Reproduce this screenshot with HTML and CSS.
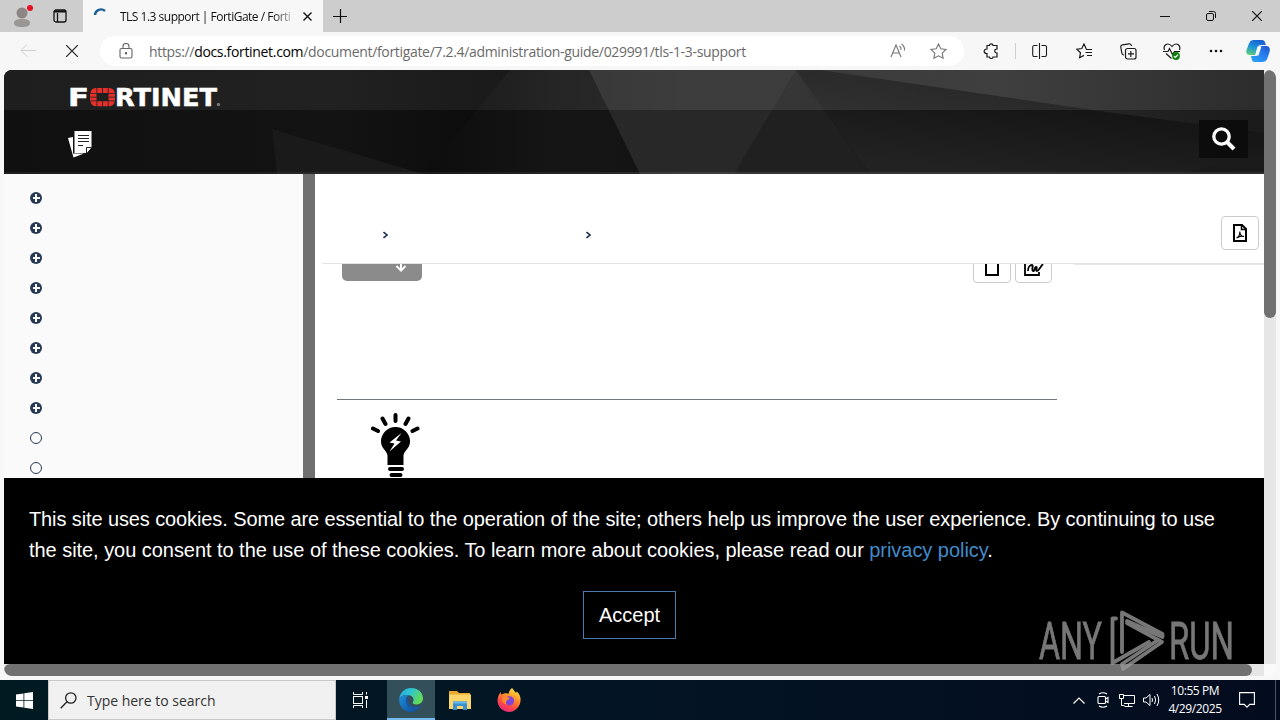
FILE: index.html
```html
<!DOCTYPE html>
<html lang="en">

<head>
    <meta charset="UTF-8">
    <meta name="viewport" content="width=device-width, initial-scale=1.0">
    <title>TLS 1.3 support | FortiGate / FortiOS</title>
    <link rel="stylesheet" href="styles.css">
</head>

<body>
    <div class="desktop">
        <div class="window">
            <div class="titlebar">
                <div class="slot avatar">
                    <svg width="22" height="24" viewBox="0 0 22 24"><circle cx="11" cy="9" r="5.5" fill="#8c8785"/><path d="M3 19c0-3 3-4 8-4s8 1 8 4-3 4-8 4-8-1-8-4z" fill="#9a9694"/><circle cx="19" cy="4" r="3" fill="#e81123"/></svg>
                </div>
                <div class="slot workspaces">
                    <svg width="14" height="14" viewBox="0 0 14 14" fill="none" stroke="#111" stroke-width="1.3"><rect x="1" y="1" width="12" height="12" rx="2"/><path d="M1 2.500h12" stroke-width="2"/><path d="M4.500 4v9"/></svg>
                </div>
                <div class="tab">
                    <svg class="spinner" width="16" height="16" viewBox="0 0 16 16" fill="none" stroke="#1b6097" stroke-width="2.400"><path d="M2 7a6 6 0 0 1 10-4"/></svg>
                    <span class="tab-title">TLS 1.3 support | FortiGate / Forti</span>
                    <svg width="9" height="9" viewBox="0 0 9 9" stroke="#111" stroke-width="1.4"><path d="M.5.5l8 8M8.500.5l-8 8"/></svg>
                </div>
                <div class="slot new-tab">
                    <svg width="14" height="14" viewBox="0 0 14 14" stroke="#111" stroke-width="1.2"><path d="M7.500 0v14M0 7.500h14"/></svg>
                </div>
                <div class="controls">
                    <svg width="10" height="10" viewBox="0 0 10 10" stroke="#111"><path d="M0 5.500h10"/></svg>
                    <svg width="10" height="10" viewBox="0 0 10 10" fill="none" stroke="#111"><rect x=".5" y="2.500" width="7" height="7" rx="1.500"/><path d="M3 .5h4.500a2 2 0 0 1 2 2V7"/></svg>
                    <svg width="10" height="10" viewBox="0 0 10 10" stroke="#111" stroke-width="1.200"><path d="M0 0l10 10M10 0L0 10"/></svg>
                </div>
            </div>

            <div class="toolbar">
                <div class="slot back">
                    <svg width="16" height="14" viewBox="0 0 16 14" fill="none" stroke="#cfcfcf"><path d="M16 6.500H1M7 .5l-6 6 6 6"/></svg>
                </div>
                <div class="slot stop">
                    <svg width="12" height="12" viewBox="0 0 12 12" stroke="#222" stroke-width="1.200"><path d="M0 0l12 12M12 0L0 12"/></svg>
                </div>
                <div class="address">
                    <div class="slot lock">
                        <svg width="14" height="16" viewBox="0 0 14 16" fill="none" stroke="#666" stroke-width="1.100"><rect x="1" y="5.500" width="12" height="9.500" rx="1.500"/><path d="M4 5.500V3.500a3 3 0 0 1 6 0v2"/><circle cx="7" cy="10.200" r=".7" fill="#666"/></svg>
                    </div>
                    <div class="url">https://<b>docs.fortinet.com</b>/document/fortigate/7.2.4/administration-guide/029991/tls-1-3-support</div>
                    <div class="slot read">
                        <svg width="16" height="16" viewBox="0 0 16 16" fill="none" stroke="#777" stroke-width="1.100"><path d="M1 14L6 2l5 12M2.700 10h6.600M9.500 3q1.800 1.500 1.500 4M11.500 1q3.500 2.500 3 6.500"/></svg>
                    </div>
                    <div class="slot star">
                        <svg width="17" height="17" viewBox="0 0 17 17" fill="none" stroke="#777" stroke-width="1.100"><path d="M8.500 1l2.300 4.800 5.200.7-3.800 3.600.9 5.200-4.600-2.500-4.600 2.500.9-5.200L1 6.500l5.200-.7z"/></svg>
                    </div>
                </div>
                <div class="slot puzzle">
                    <svg width="16" height="16" viewBox="0 0 16 16" fill="none" stroke="#1b1b1b" stroke-width="1.200"><path d="M4 2.500h2.500C6.500.2 10 .2 10 2.500h4V6c-3-.3-3 4.200 0 4v4h-4c0 2-3.500 2-3.500 0H4v-3.500C.2 10.500.2 6 4 6z"/></svg>
                </div>
                <div class="separator"></div>
                <div class="tools">
                    <svg width="16" height="16" viewBox="0 0 16 16" fill="none" stroke="#1b1b1b" stroke-width="1.100"><path d="M5.500 2.500H2A1.500 1.500 0 0 0 .7 4v8A1.500 1.500 0 0 0 2 13.500h3.500M9.500 2.500H13A1.500 1.500 0 0 1 14.500 4v8a1.500 1.500 0 0 1-1.500 1.500H9.500M7.500 0v16"/></svg>
                    <svg width="17" height="16" viewBox="0 0 17 16" fill="none" stroke="#1b1b1b" stroke-width="1.200"><path d="M16 6.500h-5.500L8 1 5.800 5.500.8 6.200l3.700 3.500-.9 5L8 12.400M9.500 9.500H16M11 12.500h5"/></svg>
                    <svg width="17" height="17" viewBox="0 0 17 17" fill="none" stroke="#1b1b1b" stroke-width="1.200"><rect x="5.500" y="5.500" width="10.500" height="10.500" rx="2"/><path d="M10.800 8v6M8 10.800h6M4 12C2.500 12 2 11 1.700 9.500L.8 4C.6 2.700 1.300 2 2.500 1.800L9 .8c1.500-.2 2.300.6 2.600 2.200"/></svg>
                    <svg width="18" height="17" viewBox="0 0 18 17" fill="none" stroke="#1b1b1b" stroke-width="1.200"><path d="M1.500 7C.3 4 2 1 4.700 1 7 1 8 2.200 9 3.500 10 2.200 11 1 13.300 1 16 1 17.600 4 16.500 7M0 8.500h5l1.500-3 3 6 2-3H17M3 10.500l5.500 5"/><circle cx="13" cy="13" r="3.900" fill="#107c10" stroke="none"/><path d="M11 13.200l1.500 1.300L15 11.700" stroke="#fff"/></svg>
                    <svg width="14" height="4" viewBox="0 0 14 4" fill="#111"><circle cx="2" cy="2" r="1.300"/><circle cx="7" cy="2" r="1.300"/><circle cx="12" cy="2" r="1.300"/></svg>
                </div>
                <div class="slot copilot">
                    <svg width="24" height="22" viewBox="0 0 24 22">
                        <defs>
                            <linearGradient id="cpA" x1=".6" y1="0" x2=".2" y2="1"><stop offset="0" stop-color="#1a5fd0"/><stop offset=".5" stop-color="#1e95d8"/><stop offset="1" stop-color="#5ed07a"/></linearGradient>
                            <linearGradient id="cpB" x1="1" y1="0" x2=".2" y2="1"><stop offset="0" stop-color="#1c55c8"/><stop offset=".5" stop-color="#2a7df0"/><stop offset="1" stop-color="#28a1f3"/></linearGradient>
                        </defs>
                        <path d="M8 0h8c3 0 3 3 4 5h-5c-2 0-3 1-3.500 3L9.500 15H4c-3 0-4.500-2-3.500-5L3 3.500C4 1 5.500 0 8 0z" fill="url(#cpA)"/>
                        <path d="M16 22H9c-3 0-3-2-4-6h4c2 0 3-1 3.500-3l2-7H20c3.500 0 4.500 2.500 3.500 6l-2 6c-1 3-3 4-5.500 4z" fill="url(#cpB)"/>
                        <path d="M11.500 6.500h4L12.500 15.500H9z" fill="#f4f9ff"/>
                    </svg>
                </div>
            </div>

            <div class="viewport">
                <div class="page">
                    <header class="site-header">
                        <svg class="facets" width="1260" height="104" viewBox="4 70 1260 104">
                            <defs>
                                <linearGradient id="fold" x1="0" y1="0" x2="1" y2="0"><stop offset="0" stop-color="#101010"/><stop offset=".65" stop-color="#131313"/><stop offset="1" stop-color="#0b0b0b"/></linearGradient>
                                <linearGradient id="valley" x1="0" y1="0" x2="1" y2="0"><stop offset="0" stop-color="#0d0d0d"/><stop offset=".6" stop-color="#151515"/><stop offset="1" stop-color="#141414"/></linearGradient>
                                <linearGradient id="slope" gradientUnits="userSpaceOnUse" x1="1010" y1="92" x2="1000" y2="174"><stop offset="0" stop-color="#141414"/><stop offset="1" stop-color="#222"/></linearGradient>
                                <linearGradient id="ridge" x1="0" y1="0" x2="1" y2="0"><stop offset="0" stop-color="#262626"/><stop offset=".4" stop-color="#2c2c2c"/><stop offset="1" stop-color="#1a1a1a"/></linearGradient>
                                <linearGradient id="shine" gradientUnits="userSpaceOnUse" x1="4" y1="0" x2="1264" y2="0"><stop offset="0" stop-color="#fff" stop-opacity=".06"/><stop offset=".4" stop-color="#fff" stop-opacity=".06"/><stop offset=".55" stop-color="#fff" stop-opacity=".1"/><stop offset="1" stop-color="#fff" stop-opacity=".08"/></linearGradient>
                            </defs>
                            <path d="M4 70H510L428 174H4z" fill="url(#fold)"/>
                            <path d="M510 70h80l51 104H424z" fill="url(#valley)"/>
                            <path d="M272 129l158 47H277z" fill="#1a1a1a"/>
                            <path d="M589 70h208l-62 104h-95z" fill="#282828"/>
                            <path d="M796 70l74 104H734z" fill="#202020"/>
                            <path d="M796 70h468v104H870z" fill="url(#slope)"/>
                            <path d="M820 70h444v63l-164-22z" fill="url(#ridge)"/>
                            <path d="M1264 154v20h-84z" fill="#1b1b1b"/>
                            <path d="M4 70h1260v40H4zM4 172h1260v2H4z" fill="url(#shine)"/>
                        </svg>
                        <div class="brand">
                            <svg width="164" height="32" viewBox="-4 -6 164 32">
                                <g class="wordmark">
                                    <text x="-2" y="18" textLength="21" lengthAdjust="spacingAndGlyphs">F</text>
                                    <text x="45" y="18" textLength="102" lengthAdjust="spacingAndGlyphs">RTINET</text>
                                </g>
                                <g fill="#e5302c">
                                    <path d="M20.500 5Q21 0 26.500 0v5zM27.300 0h10.400v5H27.300zM38.500 0q5.700 0 6.200 5h-6.200zM20 5.800h6.500v6.700H20zM38.500 5.800H45v6.700h-6.500zM20.500 13.300h6v5q-5.500 0-6-5zM27.300 13.300h10.400v5H27.300zM38.500 13.300h6.200q-.5 5-6.200 5z"/>
                                    <path d="M32 0h.9v5H32zM32 13.300h.9v5H32zM20 8.800h6.500v.8H20zM38.500 8.800H45v.8h-6.500z" fill="#1d1d1d"/>
                                </g>
                                <circle cx="148.500" cy="16.500" r="1.700" fill="#777"/>
                            </svg>
                        </div>
                        <div class="nav">
                            <svg width="25" height="27" viewBox="0 0 25 27"><path d="M0 7l5-1v16.500h11L5.500 26.500z" fill="#fff"/><path d="M6.500 0h17v16l-5 6h-12z" fill="#fff"/><path d="M10 4.500h11M10 7.500h11M10 10.500h11M10 14.500h5" stroke="#222" stroke-width="1.200"/><path d="M18.500 22v-5.500h5" fill="#fff" stroke="#222"/></svg>
                            <button class="search-btn">
                                <svg width="24" height="24" viewBox="0 0 24 24" fill="none" stroke="#fff"><circle cx="9.500" cy="9.500" r="7.700" stroke-width="3.300"/><path d="M15 15l7 7" stroke-width="4"/></svg>
                            </button>
                        </div>
                    </header>

                    <div class="content">
                        <ul class="toc">
                            <li><i class="node plus"></i></li>
                            <li><i class="node plus"></i></li>
                            <li><i class="node plus"></i></li>
                            <li><i class="node plus"></i></li>
                            <li><i class="node plus"></i></li>
                            <li><i class="node plus"></i></li>
                            <li><i class="node plus"></i></li>
                            <li><i class="node plus"></i></li>
                            <li><i class="node"></i></li>
                            <li><i class="node"></i></li>
                        </ul>
                        <div class="resizer"></div>
                        <main class="doc">
                            <div class="crumbs">
                                <svg class="crumb-first" width="5" height="8" viewBox="0 0 5 8" fill="none" stroke="#1d2f50" stroke-width="1.600"><path d="M.5 1L4 4 .5 7"/></svg>
                                <svg class="crumb-second" width="5" height="8" viewBox="0 0 5 8" fill="none" stroke="#1d2f50" stroke-width="1.600"><path d="M.5 1L4 4 .5 7"/></svg>
                                <button class="icon-btn pdf">
                                    <svg width="14" height="18" viewBox="0 0 14 18" fill="none" stroke="#000"><path d="M1 1h8l4 4v12H1z" stroke-width="2"/><path d="M8.500 1v4.500H13" stroke-width="1.500"/><path d="M3.500 14c2-1 3.500-4 3.300-6.500C7 11 9 12.500 11 12.500c-2-.8-5 0-7.500 1.500" stroke-width="1.100"/></svg>
                                </button>
                            </div>
                            <div class="actions">
                                <div class="version">
                                    <svg width="12" height="14" viewBox="0 0 12 14" fill="none" stroke="#fff" stroke-width="2"><path d="M6 0v12M1.500 7L6 11.500 10.500 7"/></svg>
                                </div>
                                <button class="icon-btn copy">
                                    <svg width="14" height="18" viewBox="0 0 14 18" fill="none" stroke="#000" stroke-width="2"><path d="M1 1h12v16H1z"/></svg>
                                </button>
                                <button class="icon-btn chart">
                                    <svg width="20" height="18" viewBox="0 0 20 18" fill="none" stroke="#000" stroke-width="1.800"><path d="M1 1v16h14v-3"/><path d="M4 13c0-4 2-6 4-6s-1 5 1 6 1-4 3-4-1 4 1 4 3-4 6-7" stroke-width="1.800"/></svg>
                                </button>
                                <div class="aside-line"></div>
                            </div>
                            <div class="article">
                                <hr>
                                <svg class="tip" width="50" height="65" viewBox="0 0 50 65">
                                    <g stroke="#000" stroke-width="4" stroke-linecap="round"><path d="M25.500 2v6M12.500 5.500l3 5.500M38.500 5.500L35.500 11M3 15.500L8 18M47.500 15.500l-5 2.500"/></g>
                                    <path d="M25.500 14a14.500 14.500 0 0 1 14.500 14.500c0 7-6 9-6.500 14V52h-16v-9.500c-.5-5-6.500-7-6.500-14A14.500 14.500 0 0 1 25.500 14z"/>
                                    <path d="M31.500 20l-12 9.500 5 1-5 8 11.500-10-5-1z" fill="#fff"/>
                                    <path d="M20 56h12M21.500 62h9" stroke="#000" stroke-width="4" stroke-linecap="round"/>
                                </svg>
                            </div>
                        </main>
                    </div>

                    <div class="cookies">
                        <p><span class="first-line">This site uses cookies. Some are essential to the operation of the site; others help us improve the user experience. By continuing to use</span><br>the site, you consent to the use of these cookies. To learn more about cookies, please read our <a href="#">privacy policy</a>.</p>
                        <button class="accept">Accept</button>
                    </div>
                </div>
                <div class="scroll-y"><div class="thumb"></div></div>
                <div class="scroll-x"><div class="thumb"></div></div>
            </div>
        </div>

        <div class="taskbar">
            <div class="slot start">
                <svg width="17" height="17" viewBox="0 0 17 17" fill="#fff"><path d="M0 2.500l7.500-1V8H0zM8.300 1.300L17 0v8H8.300zM0 8.800h7.500v6.700l-7.500-1zM8.300 8.800H17V17l-8.700-1.300z"/></svg>
            </div>
            <div class="search">
                <svg width="17" height="17" viewBox="0 0 17 17" fill="none" stroke="#222" stroke-width="1.300"><circle cx="10.800" cy="6" r="5.200"/><path d="M7 9.800L.7 16.300"/></svg>
                <span>Type here to search</span>
            </div>
            <div class="slot app task-view">
                <svg width="17" height="16" viewBox="0 0 17 16" fill="none" stroke="#fff"><path d="M1.500 0v2.500h9V0M1.500 16v-2.500h9V16M14.500 0v2.500M14.500 8v8"/><rect x="1.500" y="4.500" width="9" height="7"/><path d="M13 5.500h3" stroke-width="3"/></svg>
            </div>
            <div class="slot app active">
                <svg width="24" height="24" viewBox="0 0 24 24">
                    <defs>
                        <linearGradient id="edTop" x1="0" y1="0" x2="1" y2=".4"><stop offset="0" stop-color="#2ba6e0"/><stop offset=".5" stop-color="#2fc6cf"/><stop offset="1" stop-color="#62d957"/></linearGradient>
                        <linearGradient id="edLow" x1="0" y1="0" x2="1" y2="1"><stop offset="0" stop-color="#1e8fdc"/><stop offset="1" stop-color="#0c4c9c"/></linearGradient>
                    </defs>
                    <path d="M.2 11C.8 4.500 5.800 0 12 0c7 0 12 4.800 12 10.300 0 4-3 6.200-6.500 6.200-3 0-4.300-1.200-3.700-2.200 2-2.800.2-6.500-3.800-7C5.500 6.500 1.500 8 .2 11z" fill="url(#edTop)"/>
                    <path d="M.2 11C1.500 8 5.500 6.500 10 7.300 7.500 8.500 6.500 11 6.800 13.500 7.500 18.500 12 22 18 21.500 16 23.300 14 24 12 24 5 24-.3 18 .2 11z" fill="url(#edLow)"/>
                    <path d="M10 9.500c-2.500 4 0 9.500 6.500 9.500 2.500 0 4.500-.6 6-1.700-1 2-2.500 3.500-4.500 4.200C11 22 6 17 7 12c.5-1.500 1.500-2.300 3-2.500z" fill="#1657a8"/>
                </svg>
            </div>
            <div class="slot app">
                <svg width="22" height="20" viewBox="0 0 22 20"><path d="M0 1h8l2 2h11v16H0z" fill="#e8a92c"/><path d="M0 4.500h22V19H0z" fill="#fbd46a"/><path d="M4 20v-8.500h14V20h-4v-4H8v4z" fill="#3a8fd0"/><path d="M4 11.500h14v2H4z" fill="#67b6e8"/></svg>
            </div>
            <div class="slot app">
                <svg width="24" height="24" viewBox="0 0 24 24">
                    <defs><linearGradient id="fx" x1=".8" y1="0" x2=".3" y2="1"><stop offset="0" stop-color="#fff04a"/><stop offset=".35" stop-color="#ff9a2a"/><stop offset=".7" stop-color="#ff4a45"/><stop offset="1" stop-color="#e5257e"/></linearGradient></defs>
                    <path d="M15 0c2 2 2.500 3.500 4 5l.8-1.500C22.500 6 24 9 23.500 13 23 19 18 24 12 24S.5 19 .5 12.500C.5 9 2 6.500 3.500 4l.7 2.500L7 5.500C9 5 11 5.500 11.500 6c.3-2.500 1.500-4.500 3.500-6z" fill="url(#fx)"/>
                    <circle cx="12.500" cy="12.800" r="4.600" fill="#8144d8"/>
                    <path d="M6 9c3-1 4.500.5 7 1-1 1.500-3 1.500-3.500 3 0 0-1.500 2 .5 3.500-4 0-6-4-4-7.500z" fill="#ff8a2e"/>
                </svg>
            </div>
            <div class="tray">
                <svg width="12" height="7" viewBox="0 0 12 7" fill="none" stroke="#fff" stroke-width="1.200"><path d="M.5 6.500L6 1l5.500 5.500"/></svg>
                <svg width="14" height="16" viewBox="0 0 14 16" fill="none" stroke="#fff" stroke-width="1.100"><rect x="2" y="4.500" width="7.500" height="7" rx="1"/><path d="M9.500 7l2.500-1.500v5L9.500 9M3 2q4-2.500 8 0M3 14q4 2.500 8 0"/></svg>
                <svg width="16" height="14" viewBox="0 0 16 14" fill="none" stroke="#fff"><path d="M5 2.500h10.500v8H5M5.500 13.500h8M9.500 10.500v3M.5 1.500h4v4h-4zM2.500 5.500v7h3"/></svg>
                <svg width="17" height="14" viewBox="0 0 17 14" fill="none" stroke="#fff"><path d="M.5 5v4h2.500L7 12.500v-11L3 5zM9 5q1 2 0 4M11.500 3q2.300 4 0 8M14 1q3.500 6 0 12"/></svg>
            </div>
            <div class="clock">10:55 PM<br>4/29/2025</div>
            <div class="slot notify">
                <svg width="16" height="16" viewBox="0 0 16 16" fill="none" stroke="#fff" stroke-width="1.100"><path d="M.6.6h14.800v11.800h-4.600L8 15.200l-2.800-2.800H.6z"/></svg>
            </div>
            <div class="peek"></div>
        </div>

        <svg class="watermark" width="196" height="70" viewBox="-1 0 196 70">
            <g class="watermark-text">
                <text x="0" y="49" textLength="63" lengthAdjust="spacingAndGlyphs">ANY</text>
                <text x="130" y="49" textLength="65" lengthAdjust="spacingAndGlyphs">RUN</text>
            </g>
            <g fill="none" stroke="#999" stroke-width="3.800" stroke-linejoin="round" stroke-linecap="round">
                <path d="M83 42V2.500L123.500 24v3L88 11"/>
                <path d="M77 8.500h-3.500V53L110 32"/>
                <path d="M88 13l35 19-39 27-1-5 36-24"/>
            </g>
        </svg>
    </div>
</body>

</html>
```
FILE: styles.css
```css
* {
    box-sizing: border-box;
}

body {
    margin: 0;
    font-family: 'Open Sans', 'Noto Sans', sans-serif;
    overflow: hidden;
}

svg {
    display: block;
    flex: none;
}

button {
    padding: 0;
    cursor: pointer;
}

.desktop {
    position: relative;
    width: 1280px;
    height: 720px;
    display: flex;
    flex-direction: column;
}

.slot {
    flex: none;
    display: flex;
    align-items: center;
    justify-content: center;
}

/* browser window */
.window {
    height: 680px;
    background: #f7f7f7;
}

.titlebar {
    height: 32px;
    display: flex;
    background: #cdcdcd;
}

.avatar {
    width: 44px;
}

.workspaces {
    width: 32px;
}

.tab {
    width: 240px;
    margin-left: 7px;
    padding: 0 11px 0 10px;
    display: flex;
    align-items: center;
    background: #f7f7f7;
}

.spinner {
    margin-right: 11px;
}

.tab-title {
    width: 174px;
    margin-right: 9px;
    font-size: 12px;
    letter-spacing: -0.5px;
    white-space: nowrap;
    color: #111;
    mask-image: linear-gradient(to right, #000 88%, rgba(0, 0, 0, 0.15));
}

.new-tab {
    width: 34px;
}

.controls {
    margin-left: auto;
    display: flex;
}

.controls svg {
    margin: 11px 18px;
}

.toolbar {
    height: 38px;
    display: flex;
    align-items: center;
}

.back {
    width: 56px;
}

.stop {
    width: 32px;
}

.address {
    width: 864px;
    height: 30px;
    margin-left: 12px;
    padding: 0 6px 0 3px;
    display: flex;
    align-items: center;
    background: #fff;
    border-radius: 15px;
}

.lock {
    width: 46px;
}

.url {
    flex: 1;
    font-size: 14px;
    letter-spacing: -0.325px;
    white-space: nowrap;
    color: #6a6a6a;
}

.url b {
    font-weight: 400;
    color: #000;
}

.read,
.star {
    width: 40px;
}

.puzzle {
    width: 42px;
    margin-left: 6px;
}

.separator {
    width: 1px;
    height: 16px;
    margin: 0 2px 0 3px;
    background: #cfcfcf;
}

.tools {
    display: grid;
    grid-template-columns: repeat(5, 44px);
    align-items: center;
    justify-items: center;
}

.copilot {
    width: 40px;
}

.viewport {
    width: 1272px;
    height: 606px;
    margin-left: 4px;
    display: grid;
    grid-template-columns: 1260px 12px;
    grid-template-rows: 594px 12px;
    border-radius: 8px;
    overflow: hidden;
    background: #fafafa;
}

.scroll-y {
    background: #e6e6e6;
}

.scroll-y .thumb {
    height: 248px;
    border-radius: 6px;
    background: #717171;
}

.scroll-x {
    background: #e6e6e6;
}

.scroll-x .thumb {
    width: 1248px;
    height: 12px;
    border-radius: 6px;
    background: #717171;
}

/* docs site */
.page {
    display: flex;
    flex-direction: column;
    background: #fff;
}

.site-header {
    position: relative;
    flex: none;
    height: 104px;
    background: #111;
}

.facets {
    position: absolute;
    inset: 0;
}

.brand {
    position: relative;
    height: 40px;
    padding: 12px 0 0 62px;
}

.wordmark {
    font-family: 'DejaVu Sans', sans-serif;
    font-weight: bold;
    font-size: 24px;
    fill: #fff;
    stroke: #fff;
    stroke-width: 0.5px;
}

.nav {
    position: relative;
    height: 62px;
    padding: 0 16px 0 64px;
    display: flex;
    align-items: center;
    justify-content: space-between;
}

.nav > svg {
    margin-top: 6px;
}

.search-btn {
    width: 49px;
    height: 38px;
    margin-bottom: 4px;
    display: flex;
    align-items: center;
    justify-content: center;
    border: none;
    background: #0c0c0c;
}

.content {
    height: 304px;
    display: flex;
    overflow: hidden;
}

.toc {
    width: 299px;
    margin: 0;
    padding: 8px 0 0 26px;
    list-style: none;
    background: #fafafa;
}

.toc li {
    height: 30px;
    display: flex;
    align-items: center;
}

.node {
    width: 12px;
    height: 12px;
    margin-top: 1px;
    border: 1px solid #263a56;
    border-radius: 50%;
}

.plus {
    border: none;
    background: linear-gradient(#fff, #fff) center / 7px 2px no-repeat,
        linear-gradient(#fff, #fff) center / 2px 8px no-repeat,
        #263a56;
}

.resizer {
    width: 12px;
    background: #6f6f6f;
}

.doc {
    width: 949px;
}

.crumbs {
    height: 90px;
    margin-left: 7px;
    padding: 32px 5px 0 61px;
    display: flex;
    align-items: center;
    border-bottom: 1px solid #e3e3e3;
}

.crumb-second {
    margin-left: 198px;
}

.icon-btn {
    width: 38px;
    height: 34px;
    display: flex;
    align-items: center;
    justify-content: center;
    background: #fff;
    border: 1px solid #ccc;
    border-radius: 4px;
}

.pdf {
    margin: 0 0 3px auto;
}

.actions {
    height: 19px;
    padding-left: 27px;
    display: flex;
    align-items: flex-end;
    overflow: hidden;
}

.version {
    width: 80px;
    height: 34px;
    margin: 0 551px 2px 0;
    padding: 12px 0 0 53px;
    border-radius: 5px;
    background: #8b8b8b;
}

.copy {
    margin-right: 4px;
}

.chart {
    width: 37px;
}

.copy svg,
.chart svg {
    margin-top: 1px;
}

.aside-line {
    align-self: flex-start;
    flex: 1;
    height: 1px;
    margin-left: 22px;
    background: #e6e6e6;
}

.article {
    padding: 116px 0 0 22px;
}

.article hr {
    width: 720px;
    height: 1px;
    margin: 0;
    border: none;
    background: #74797e;
}

.tip {
    margin: 13px 0 0 33px;
}

.cookies {
    height: 186px;
    padding: 26px 24px 0;
    background: #000;
    color: #fff;
    font: 20px/31px 'Liberation Sans', Arial, sans-serif;
}

.cookies p {
    margin: 0 0 25px 1px;
    letter-spacing: -0.045px;
    white-space: nowrap;
}

.first-line {
    letter-spacing: -0.108px;
}

.cookies a {
    color: #428bca;
    text-decoration: none;
}

.accept {
    display: block;
    width: 93px;
    height: 48px;
    margin-left: 555px;
    border: 1px solid #4a7aab;
    background: #000;
    color: #fff;
    font: inherit;
}

/* taskbar */
.taskbar {
    height: 40px;
    display: flex;
    background: linear-gradient(to right, #001a22, #031424 50%, #030c1e);
    color: #fff;
}

.start {
    width: 48px;
}

.search {
    width: 288px;
    padding-left: 11px;
    display: flex;
    align-items: center;
    background: #f1f1f1;
    border: 1px solid #c9c9c9;
    color: #333;
    font-size: 14px;
}

.search span {
    margin-left: 10px;
    letter-spacing: -0.02px;
}

.app {
    width: 48px;
    margin-right: 1px;
}

.task-view {
    margin-right: 3px;
}

.active {
    background: #33505a;
    box-shadow: inset 0 -2px #76b9ed;
}

.tray {
    margin-left: auto;
    display: grid;
    grid-template-columns: repeat(4, 24px);
    align-items: center;
    justify-items: center;
}

.clock {
    width: 64px;
    padding-top: 2px;
    font-size: 12px;
    line-height: 18px;
    letter-spacing: -0.4px;
    text-align: center;
    white-space: nowrap;
}

.notify {
    width: 40px;
}

.peek {
    width: 5px;
    margin-left: 8px;
    border-left: 1px solid #4b5563;
}

.watermark {
    position: absolute;
    left: 1038px;
    top: 610px;
    opacity: 0.78;
}

.watermark-text {
    font-family: Roboto, sans-serif;
    font-size: 52px;
    font-weight: 400;
    fill: #999;
    stroke: #999;
    stroke-width: 0.8px;
}
```
